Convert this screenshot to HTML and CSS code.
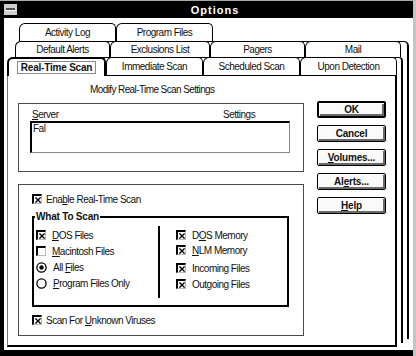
FILE: index.html
```html
<!DOCTYPE html>
<html>
<head>
<meta charset="utf-8">
<link rel="stylesheet" href="styles.css">
</head>
<body>
<div class="window">
  <div class="titlebar">
    <div class="sysmenu"><span class="dash"></span></div>
    <div class="title">Options</div>
  </div>
  <div class="client">
    <div class="stack">
      <div class="tabrow row1">
        <div class="tab w97">Activity Log</div>
        <div class="tab w97">Program Files</div>
      </div>
      <div class="tabrow row2">
        <div class="tab w95">Default Alerts</div>
        <div class="tab w100">Exclusions List</div>
        <div class="tab w95">Pagers</div>
        <div class="tab w96">Mail</div>
      </div>
      <div class="tabrow row3">
        <div class="tab sel w99"><span class="focus">Real-Time Scan</span></div>
        <div class="tab w97">Immediate Scan</div>
        <div class="tab w97">Scheduled Scan</div>
        <div class="tab w97">Upon Detection</div>
      </div>
      <div class="page">
        <div class="leftcol">
          <div class="caption">Modify Real-Time Scan Settings</div>
          <div class="group group1">
            <div class="hdr"><span><u>S</u>erver</span><span>Settings</span></div>
            <div class="listbox">Fal</div>
          </div>
          <div class="group group2">
            <div class="row"><span class="cb"><svg viewBox="0 0 7 7"><path d="M0.5 0.5L6.5 6.5M6.5 0.5L0.5 6.5"/></svg></span><span>Ena<u>b</u>le Real-Time Scan</span></div>
            <fieldset class="wts">
              <legend>What To Scan</legend>
              <div class="cols">
                <div class="col colleft">
                  <div class="row"><span class="cb"><svg viewBox="0 0 7 7"><path d="M0.5 0.5L6.5 6.5M6.5 0.5L0.5 6.5"/></svg></span><span><u>D</u>OS Files</span></div>
                  <div class="row"><span class="cb"></span><span><u>M</u>acintosh Files</span></div>
                  <div class="row"><svg class="radio" viewBox="0 0 11 11"><circle cx="5.5" cy="5.5" r="4.6" class="ring"/><circle cx="5.5" cy="5.5" r="2.2" class="dot"/></svg><span>All <u>F</u>iles</span></div>
                  <div class="row"><svg class="radio" viewBox="0 0 11 11"><circle cx="5.5" cy="5.5" r="4.6" class="ring"/></svg><span><u>P</u>rogram Files Only</span></div>
                </div>
                <div class="divider"></div>
                <div class="col colright">
                  <div class="row"><span class="cb"><svg viewBox="0 0 7 7"><path d="M0.5 0.5L6.5 6.5M6.5 0.5L0.5 6.5"/></svg></span><span>D<u>O</u>S Memory</span></div>
                  <div class="row r2"><span class="cb"><svg viewBox="0 0 7 7"><path d="M0.5 0.5L6.5 6.5M6.5 0.5L0.5 6.5"/></svg></span><span><u>N</u>LM Memory</span></div>
                  <div class="row r3"><span class="cb"><svg viewBox="0 0 7 7"><path d="M0.5 0.5L6.5 6.5M6.5 0.5L0.5 6.5"/></svg></span><span>Incoming Files</span></div>
                  <div class="row r4"><span class="cb"><svg viewBox="0 0 7 7"><path d="M0.5 0.5L6.5 6.5M6.5 0.5L0.5 6.5"/></svg></span><span>Outgoing Files</span></div>
                </div>
              </div>
            </fieldset>
            <div class="row scanrow"><span class="cb"><svg viewBox="0 0 7 7"><path d="M0.5 0.5L6.5 6.5M6.5 0.5L0.5 6.5"/></svg></span><span>Scan For <u>U</u>nknown Viruses</span></div>
          </div>
        </div>
        <div class="buttons">
          <div class="btn default">OK</div>
          <div class="btn">Cancel</div>
          <div class="btn"><span><u>V</u>olumes...</span></div>
          <div class="btn"><span>Al<u>e</u>rts...</span></div>
          <div class="btn"><span><u>H</u>elp</span></div>
        </div>
      </div>
    </div>
  </div>
</div>
</body>
</html>
```
FILE: styles.css
```css
* { box-sizing: border-box; }
body {
  margin: 0;
  font-family: "Liberation Sans", Arial, sans-serif;
  font-size: 10px;
  color: #111;
  background: #fff;
}
u { text-decoration: underline; text-underline-offset: 1px; }

.window {
  width: 416px;
  height: 356px;
  background: #000;
  border-top: 1px solid #a8a8a8;
  border-right: 3px solid #c4c4c4;
  display: flex;
  flex-direction: column;
}
.titlebar {
  height: 17px;
  display: flex;
  align-items: center;
  padding-left: 4px;
  flex: none;
}
.sysmenu {
  width: 13px;
  height: 11px;
  background: #d0d0d0;
  display: flex;
  align-items: center;
  justify-content: center;
}
.dash {
  width: 9px;
  height: 3px;
  background: #505050;
  border-bottom: 1px solid #fff;
}
.title {
  flex: 1;
  text-align: center;
  color: #fff;
  font-weight: bold;
  font-size: 11px;
  letter-spacing: 1px;
}

.client {
  flex: 1;
  margin: 0 0 6px 4px;
  background: #fff;
  overflow: hidden;
}
.stack {
  position: relative;
  height: 100%;
  padding-top: 5px;
}
.stack::before {
  content: "";
  position: absolute;
  top: 23px;
  left: 11px;
  right: 4px;
  height: 297px;
  background: #fff;
  border-top: 1px solid #000;
  border-right: 2px solid #000;
  border-radius: 6px 5px 0 0;
}
.stack::after {
  content: "";
  position: absolute;
  top: 39px;
  left: 3px;
  right: 10px;
  height: 285px;
  background: #fff;
  border-top: 1px solid #000;
  border-right: 2px solid #000;
  border-radius: 6px 4px 0 0;
}

.tabrow {
  display: flex;
  position: relative;
  z-index: 1;
}
.row1 { margin-left: 15px; height: 18px; }
.row2 { margin-left: 11px; height: 16px; }
.row3 { margin-left: 3px; height: 18px; z-index: 3; }

.tab {
  height: 100%;
  background: #fff;
  border: 1px solid #000;
  border-bottom: none;
  border-radius: 6px 5px 0 0;
  display: flex;
  align-items: center;
  justify-content: center;
  letter-spacing: -0.5px;
  flex: none;
}
.tab.sel {
  height: 19px;
  border-width: 2px 2px 0 2px;
  font-weight: bold;
  letter-spacing: -0.2px;
}
.focus {
  border: 1px solid #8a8a8a;
  padding: 0 3px;
  line-height: 11px;
}
.w95 { width: 95px; }
.w96 { width: 96px; }
.w97 { width: 97px; }
.w99 { width: 99px; }
.w100 { width: 100px; }

.page {
  position: relative;
  z-index: 2;
  margin-left: 3px;
  width: 390px;
  height: 272px;
  background: #fff;
  border-top: 1px solid #000;
  border-left: 1px solid #777;
  border-right: 2px solid #000;
  border-bottom: 2px solid #000;
  display: flex;
}
.leftcol {
  width: 296px;
  padding-left: 10px;
  flex: none;
}
.caption {
  padding: 8px 0 0 72px;
  line-height: 12px;
  height: 20px;
  letter-spacing: -0.6px;
}
.group {
  width: 286px;
  border: 1px solid #4a4a4a;
}
.group1 {
  margin-top: 7px;
  height: 69px;
  padding-top: 6px;
}
.hdr {
  display: grid;
  grid-template-columns: 191px auto;
  padding-left: 13px;
  line-height: 10px;
  height: 10px;
  letter-spacing: -0.5px;
}
.listbox {
  margin: 1px 0 0 11px;
  width: 260px;
  height: 32px;
  border-top: 2px solid #000;
  border-left: 2px solid #000;
  border-right: 1px solid #888;
  border-bottom: 1px solid #888;
  padding: 1px 0 0 1px;
  line-height: 10px;
  letter-spacing: -0.5px;
}
.group2 {
  margin-top: 12px;
  height: 152px;
  padding: 8px 0 0 13px;
}
.row {
  display: flex;
  align-items: center;
  height: 12px;
  gap: 4px;
  letter-spacing: -0.5px;
  white-space: nowrap;
}
.cb {
  width: 10px;
  height: 10px;
  flex: none;
  border-top: 2px solid #000;
  border-left: 2px solid #000;
  border-right: 1px solid #bbb;
  border-bottom: 1px solid #bbb;
  display: flex;
  align-items: center;
  justify-content: center;
}
.cb svg {
  width: 6px;
  height: 6px;
  display: block;
}
.cb svg path {
  stroke: #000;
  stroke-width: 1.6;
  fill: none;
}
.radio {
  width: 11px;
  height: 11px;
  flex: none;
}
.radio .ring { fill: #fff; stroke: #000; stroke-width: 1.3; }
.radio .dot { fill: #000; }

.wts {
  margin: 6px 0 0 0;
  padding: 0;
  width: 257px;
  height: 96px;
  border: 2px solid #000;
  min-width: 0;
}
.wts legend {
  font-weight: bold;
  padding: 0 1px;
  margin-left: 1px;
  line-height: 12px;
  letter-spacing: -0.2px;
}
.cols {
  display: flex;
}
.col {
  display: flex;
  flex-direction: column;
}
.colleft {
  width: 124px;
  padding: 6px 0 0 2px;
  gap: 4px;
}
.colleft .row { gap: 6px; }
.divider {
  width: 2px;
  height: 72px;
  margin-top: 3px;
  background: #000;
}
.colright {
  padding: 6px 0 0 16px;
}
.colright .row { gap: 6px; }
.colright .r2 { margin-top: 3px; }
.colright .r3 { margin-top: 6px; }
.colright .r4 { margin-top: 4px; }
.scanrow { margin-top: 7px; }

.buttons {
  margin-left: 13px;
  padding-top: 25px;
  width: 69px;
  display: flex;
  flex-direction: column;
  gap: 7px;
}
.btn {
  height: 17px;
  border: 1px solid #000;
  border-radius: 2px;
  box-shadow: inset 1px 1px 0 #fff, inset -2px -2px 0 #6a6a6a;
  background: #fafafa;
  font-weight: bold;
  display: flex;
  align-items: center;
  justify-content: center;
  letter-spacing: -0.2px;
  padding-bottom: 1px;
}
.btn.default {
  border-width: 2px;
}
```
